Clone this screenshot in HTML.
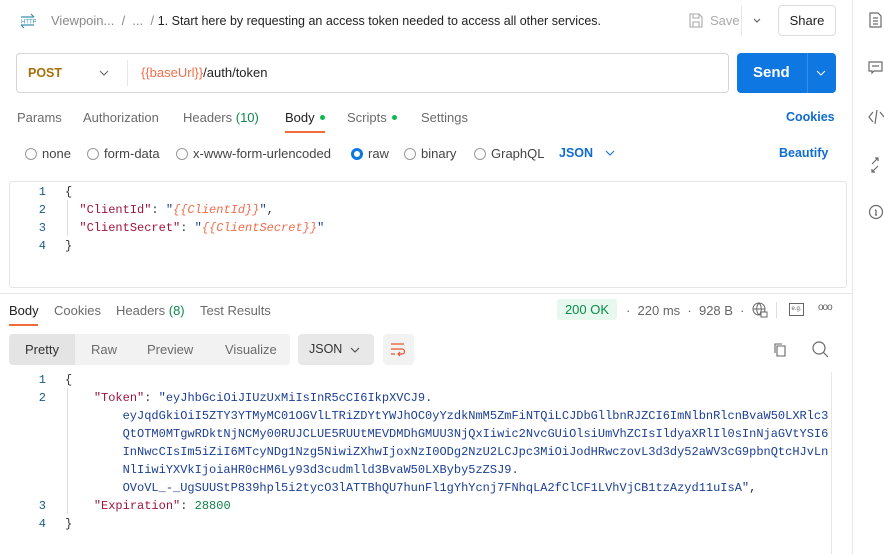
<!DOCTYPE html>
<html><head><meta charset="utf-8"><style>
*{margin:0;padding:0;box-sizing:border-box}
body{width:884px;height:554px;overflow:hidden;background:#fff;font-family:"Liberation Sans",sans-serif;font-size:13px;color:#6b6b6b;position:relative}
.a{position:absolute;white-space:nowrap}
.mono{font-family:"Liberation Mono",monospace;font-size:12px}
.ln{color:#1a5b8a;width:14px;text-align:right}
.k{color:#a0143c}.s{color:#1c3f94}.v{color:#f06d4b;font-style:italic}.n{color:#11804a}.p{color:#333}
.radio{display:inline-block;width:12px;height:12px;border:1px solid #999;border-radius:50%;vertical-align:-2px;margin-right:5px}
.dot{display:inline-block;width:5px;height:5px;border-radius:50%;background:#0cbb52;vertical-align:2px;margin-left:5px}
</style></head><body>
<!-- right sidebar -->
<div class="a" style="left:852px;top:0;width:1px;height:554px;background:#e6e6e6"></div>
<svg class="a" style="left:868px;top:12px" width="16" height="215" fill="none" stroke="#6b6b6b" stroke-width="1.2">
<path d="M2 1h8l3 3v11H2z M5 6h5M5 9h5M5 12h5"/>
<path d="M1 50h13v9H6l-2 2v-2H1z M4 54h7"/>
<path d="M5 100l-4 5 4 5M9 98l-2 14M12 100l4 5"/>
<path d="M4 152l6-6M7 146h3v3M10 154l-6 6M4 157v3h3"/>
<circle cx="8" cy="200" r="6.5"/><path d="M8 198v5M7 198h1M7 203h2"/>
</svg>
<!-- top bar -->
<svg class="a" style="left:20px;top:13px" width="16" height="16" fill="none" stroke="#3a8fb0" stroke-width="1.2"><path d="M1 4h13M11 1l3 3M1 12h13M4 15l-3-3"/><text x="1" y="10.5" font-size="6" fill="#3a8fb0" stroke="none" font-family="Liberation Sans">HTTP</text></svg>
<div class="a" style="left:51px;top:13px;font-size:13px;color:#8a8a8a">Viewpoin... &nbsp;/ &nbsp;... &nbsp;/ <span style="color:#222;font-size:12.5px">1. Start here by requesting an access token needed to access all other services.</span></div>
<svg class="a" style="left:689px;top:13px" width="14" height="15" fill="none" stroke="#aaa" stroke-width="1.1"><path d="M1 1h9l3 3v10H1z M4 1v4h6V1 M4 14V9h6v5"/></svg>
<div class="a" style="left:710px;top:13px;color:#aaa">Save</div>
<div class="a" style="left:741px;top:6px;width:1px;height:30px;background:#e6e6e6"></div>
<svg class="a" style="left:753px;top:18px" width="8" height="5" fill="none" stroke="#555"><path d="M1 1l3 3 3-3"/></svg>
<div class="a" style="left:778px;top:5px;width:58px;height:31px;border:1px solid #ddd;border-radius:4px;color:#222;text-align:center;line-height:29px">Share</div>
<!-- url bar -->
<div class="a" style="left:16px;top:53px;width:713px;height:40px;border:1px solid #d6d6d6;border-radius:4px"></div>
<div class="a" style="left:28px;top:66px;color:#a66f0a;font-weight:bold;font-size:12.5px">POST</div>
<svg class="a" style="left:99px;top:70px" width="10" height="6" fill="none" stroke="#666"><path d="M1 1l4 4 4-4"/></svg>
<div class="a" style="left:127px;top:60px;width:1px;height:26px;background:#e6e6e6"></div>
<div class="a" style="left:141px;top:65px;color:#222"><span style="color:#f06d4b">{{baseUrl}}</span>/auth/token</div>
<div class="a" style="left:737px;top:53px;width:99px;height:40px;background:#0f77e2;border-radius:4px"></div>
<div class="a" style="left:807px;top:53px;width:1px;height:40px;background:#3a8ee6"></div>
<div class="a" style="left:753px;top:64px;color:#fff;font-weight:bold;font-size:15px">Send</div>
<svg class="a" style="left:816px;top:70px" width="10" height="6" fill="none" stroke="#fff"><path d="M1 1l4 4 4-4"/></svg>
<!-- tabs -->
<div class="a" style="left:17px;top:110px">Params</div>
<div class="a" style="left:83px;top:110px">Authorization</div>
<div class="a" style="left:183px;top:110px">Headers <span style="color:#0a8a4a">(10)</span></div>
<div class="a" style="left:285px;top:110px;color:#222">Body<span class="dot"></span></div>
<div class="a" style="left:285px;top:131px;width:40px;height:2px;background:#f26b3a"></div>
<div class="a" style="left:347px;top:110px">Scripts<span class="dot"></span></div>
<div class="a" style="left:421px;top:110px">Settings</div>
<div class="a" style="left:786px;top:110px;color:#0f6cd0;font-weight:bold;font-size:12.5px">Cookies</div>
<!-- radio row -->
<div class="a" style="left:25px;top:146px;color:#444"><span class="radio"></span>none</div>
<div class="a" style="left:87px;top:146px;color:#444"><span class="radio"></span>form-data</div>
<div class="a" style="left:176px;top:146px;color:#444"><span class="radio"></span>x-www-form-urlencoded</div>
<div class="a" style="left:351px;top:146px;color:#444"><span class="radio" style="border:3px solid #0f77e2"></span>raw</div>
<div class="a" style="left:404px;top:146px;color:#444"><span class="radio"></span>binary</div>
<div class="a" style="left:474px;top:146px;color:#444"><span class="radio"></span>GraphQL</div>
<div class="a" style="left:559px;top:146px;color:#0f6cd0;font-weight:bold;font-size:12.5px">JSON</div>
<svg class="a" style="left:605px;top:150px" width="10" height="6" fill="none" stroke="#0f6cd0"><path d="M1 1l4 4 4-4"/></svg>
<div class="a" style="left:779px;top:146px;color:#0f6cd0;font-weight:bold;font-size:12.5px">Beautify</div>
<!-- editor -->
<div class="a" style="left:9px;top:181px;width:838px;height:107px;border:1px solid #e4e4e4;border-radius:3px"></div>
<div class="a" style="left:67px;top:200px;width:1px;height:36px;background:#ddd"></div>
<div class="a mono ln" style="left:32px;top:183px;line-height:18px;white-space:pre">1
2
3
4</div>
<div class="a mono p" style="left:65px;top:183px;line-height:18px;white-space:pre">{
  <span class="k">"ClientId"</span>: <span class="s">"</span><span class="v">{{ClientId}}</span><span class="s">"</span>,
  <span class="k">"ClientSecret"</span>: <span class="s">"</span><span class="v">{{ClientSecret}}</span><span class="s">"</span>
}</div>
<div class="a" style="left:0;top:293px;width:852px;height:1px;background:#e6e6e6"></div>
<!-- response tabs -->
<div class="a" style="left:9px;top:303px;color:#222">Body</div>
<div class="a" style="left:9px;top:324px;width:29px;height:2px;background:#f26b3a"></div>
<div class="a" style="left:54px;top:303px">Cookies</div>
<div class="a" style="left:116px;top:303px">Headers <span style="color:#0a8a4a">(8)</span></div>
<div class="a" style="left:200px;top:303px">Test Results</div>
<div class="a" style="left:557px;top:299px;width:60px;height:21px;background:#e7f8ee;border-radius:3px;color:#0a8a4a;text-align:center;line-height:21px">200 OK</div>
<div class="a" style="left:626px;top:303px;color:#666">· &nbsp;220 ms &nbsp;· &nbsp;928 B &nbsp;·</div>
<svg class="a" style="left:752px;top:302px" width="16" height="16" fill="none" stroke="#666" stroke-width="1"><circle cx="7" cy="7" r="6"/><path d="M1 7h12M7 1c-3 3-3 9 0 12M7 1c3 3 3 9 0 12"/><rect x="9" y="10" width="6" height="5" fill="#fff"/></svg>
<div class="a" style="left:776px;top:302px;width:1px;height:16px;background:#ddd"></div>
<div class="a" style="left:789px;top:303px;width:15px;height:13px;border:1px solid #666;font-size:6px;line-height:11px;text-align:center;color:#666">e.g.</div>
<div class="a" style="left:818px;top:302px;color:#666;font-size:10px;letter-spacing:-1px">ooo</div>
<!-- response toolbar -->
<div class="a" style="left:9px;top:334px;width:281px;height:31px;background:#f2f2f2;border-radius:4px"></div>
<div class="a" style="left:9px;top:334px;width:66px;height:31px;background:#e4e4e4;border-radius:4px 0 0 4px"></div>
<div class="a" style="left:25px;top:342px;color:#333">Pretty</div>
<div class="a" style="left:91px;top:342px">Raw</div>
<div class="a" style="left:147px;top:342px">Preview</div>
<div class="a" style="left:225px;top:342px">Visualize</div>
<div class="a" style="left:298px;top:334px;width:76px;height:31px;background:#e8e8e8;border-radius:4px"></div>
<div class="a" style="left:309px;top:342px;color:#333;font-size:12.5px">JSON</div>
<svg class="a" style="left:350px;top:347px" width="10" height="6" fill="none" stroke="#444"><path d="M1 1l4 4 4-4"/></svg>
<div class="a" style="left:383px;top:334px;width:31px;height:31px;background:#f2f2f2;border-radius:4px"></div>
<svg class="a" style="left:390px;top:342px" width="16" height="15" fill="none" stroke="#e4572e" stroke-width="1.2"><path d="M1 2h13M1 7h11a2.5 2.5 0 0 1 0 5H8M10 10l-2 2 2 2M1 12h4"/></svg>
<svg class="a" style="left:773px;top:342px" width="16" height="16" fill="none" stroke="#666" stroke-width="1.1"><path d="M4 4h8v10H4z M2 11V2h7"/></svg>
<svg class="a" style="left:812px;top:341px" width="17" height="17" fill="none" stroke="#666" stroke-width="1.2"><circle cx="7" cy="7" r="6"/><path d="M11.5 11.5l4.5 4.5"/></svg>
<!-- response code -->
<div class="a" style="left:831px;top:372px;width:1px;height:182px;background:#e6e6e6"></div>
<div class="a" style="left:67px;top:388px;width:1px;height:126px;background:#ddd"></div>
<div class="a mono ln" style="left:32px;top:371px;line-height:18px;white-space:pre">1
2
 
 
 
 
 
3
4</div>
<div class="a mono p" style="left:65px;top:371px;line-height:18px;white-space:pre">{
    <span class="k">"Token"</span>: <span class="s">"eyJhbGciOiJIUzUxMiIsInR5cCI6IkpXVCJ9.
        eyJqdGkiOiI5ZTY3YTMyMC01OGVlLTRiZDYtYWJhOC0yYzdkNmM5ZmFiNTQiLCJDbGllbnRJZCI6ImNlbnRlcnBvaW50LXRlc3
        QtOTM0MTgwRDktNjNCMy00RUJCLUE5RUUtMEVDMDhGMUU3NjQxIiwic2NvcGUiOlsiUmVhZCIsIldyaXRlIl0sInNjaGVtYSI6
        InNwcCIsIm5iZiI6MTcyNDg1Nzg5NiwiZXhwIjoxNzI0ODg2NzU2LCJpc3MiOiJodHRwczovL3d3dy52aWV3cG9pbnQtcHJvLn
        NlIiwiYXVkIjoiaHR0cHM6Ly93d3cudmlld3BvaW50LXByby5zZSJ9.
        OVoVL_-_UgSUUStP839hpl5i2tycO3lATTBhQU7hunFl1gYhYcnj7FNhqLA2fClCF1LVhVjCB1tzAzyd11uIsA"</span>,
    <span class="k">"Expiration"</span>: <span class="n">28800</span>
}</div>
</body></html>
